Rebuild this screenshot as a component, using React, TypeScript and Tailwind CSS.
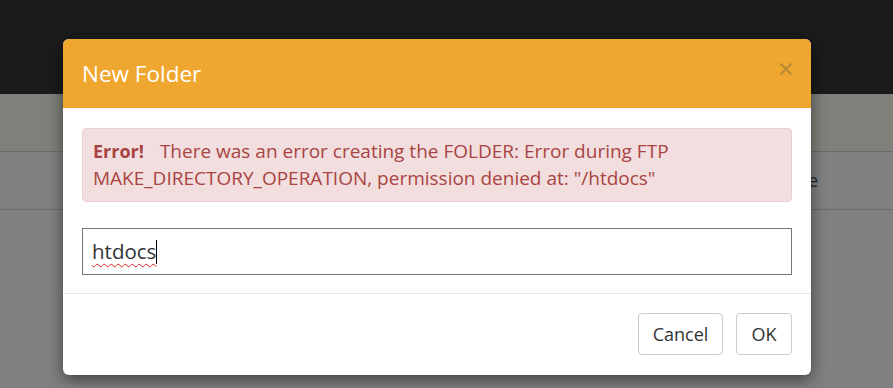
import React from "react";

export default function App() {
  const font = { fontFamily: '"Open Sans", "Noto Sans", sans-serif' };
  return (
    <div className="relative w-[893px] h-[388px] overflow-hidden bg-[#808080]" style={font}>
      {/* background page (already dimmed by backdrop) */}
      <div className="h-[94px] bg-[#1b1b1b]" />
      <div className="h-[58px] bg-[#80807a] border-b border-[#6b6b6b]" />
      <div className="h-[58px] flex items-center justify-end pr-[75px] border-b border-[#6b6b6b] text-[18px] text-[#1c2530]">
        Type
      </div>

      {/* modal */}
      <div className="absolute left-[63px] top-[39px] w-[748px] rounded-[6px] bg-white shadow-[0_5px_15px_rgba(0,0,0,0.5)] overflow-hidden">
        <div className="h-[70px] bg-[#efa72f] border-b border-[#f3f3f3] flex items-center justify-between pl-[19px] pr-[18px]">
          <h4 className="text-[22.5px] text-white leading-none pt-[1px]">New Folder</h4>
          <svg width="14" height="14" viewBox="0 0 14 14" className="mb-[9px]">
            <path d="M1.5 1.5 L12.5 12.5 M12.5 1.5 L1.5 12.5" stroke="#b88a38" strokeWidth="2" />
          </svg>
        </div>
        <div className="px-[19px] pt-[19px] pb-[18px]">
          <div className="rounded-[4px] border border-[#ebccd1] bg-[#f2dede] text-[#a94442] text-[19px] leading-[27px] px-[10px] py-[9px]">
            <strong className="font-bold text-[18px]">Error!</strong>
            <span className="ml-[16px]">There was an error creating the FOLDER: Error during FTP</span>{" "}
            <span>MAKE_DIRECTORY_OPERATION, permission denied at: "/htdocs"</span>
          </div>
          <div className="mt-[26px] h-[47px] border border-[#767676] flex items-center pl-[9px]">
            <span className="text-[20.5px] text-[#333] underline decoration-wavy decoration-[#e02020] decoration-1 underline-offset-[4px]">htdocs</span>
            <span className="w-[1px] h-[24px] bg-black" />
          </div>
        </div>
        <div className="border-t border-[#e5e5e5] flex justify-end gap-[13px] px-[19px] pt-[19px] pb-[20px]">
          <button className="h-[42px] w-[85px] rounded-[4px] border border-[#cccccc] bg-white text-[18px] text-[#333]">Cancel</button>
          <button className="h-[42px] w-[56px] rounded-[4px] border border-[#cccccc] bg-white text-[18px] text-[#333]">OK</button>
        </div>
      </div>
    </div>
  );
}
